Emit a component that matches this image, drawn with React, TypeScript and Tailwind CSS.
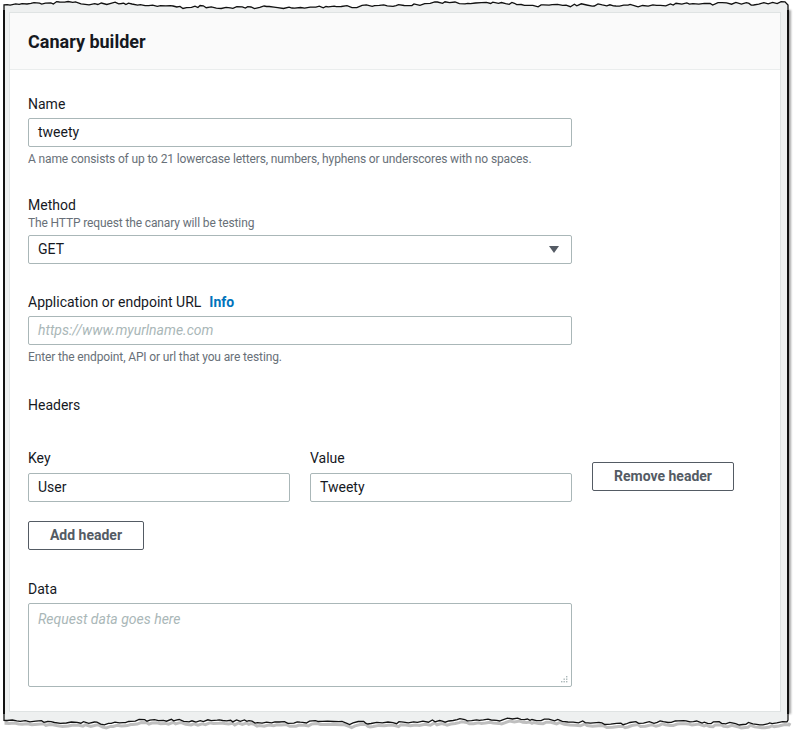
import React from "react";

// little seeded random so the torn edge is the same on every render
const makeRand = (seed: number) => () => {
  seed = (seed * 16807) % 2147483647;
  return seed / 2147483647;
};

const tornPoints = (x0: number, x1: number, base: number, amp: number, seed: number) => {
  const rand = makeRand(seed);
  const pts: [number, number][] = [];
  let x = x0;
  let drift = 0;
  while (x < x1) {
    drift += (rand() - 0.5) * 1.6;
    drift = Math.max(-amp, Math.min(amp, drift));
    const jitter = (rand() - 0.5) * 2.2;
    pts.push([x, +(base + drift + jitter).toFixed(1)]);
    x += 2 + rand() * 4;
  }
  pts.push([x1, base]);
  return pts;
};

const TornTop = () => {
  const H = 10;
  const pts = tornPoints(4, 788, 5, 2.5, 97);
  const line = pts.map(([x, y]) => `${x.toFixed(1)},${y}`).join(" L");
  return (
    <svg width="800" height={H} className="block">
      <path d={`M4,${H} L${line} L788,${H} Z`} fill="#eef0f0" />
      <path d={`M4,${H} L${line} L788,${H}`} fill="none" stroke="#111" strokeWidth="1.3" />
    </svg>
  );
};

const TornBottom = () => {
  const H = 20;
  const pts = tornPoints(4, 788, 6, 4, 4242);
  const line = pts.map(([x, y]) => `${x.toFixed(1)},${y}`).join(" L");
  const shadow = pts.map(([x, y]) => `${(x + 2).toFixed(1)},${(y + 3).toFixed(1)}`).join(" L");
  return (
    <svg width="800" height={H} className="block">
      <path d={`M6,0 L${shadow}`} fill="none" stroke="#000" strokeOpacity="0.25" strokeWidth="3" />
      <path d={`M4,0 L${line} L788,0 Z`} fill="#eef0f0" />
      <path d={`M4,0 L${line} L788,0`} fill="none" stroke="#111" strokeWidth="1.3" />
    </svg>
  );
};

const Label = ({ children }: { children: React.ReactNode }) => (
  <div className="text-[14px] leading-[20px] text-[#16191f]">{children}</div>
);

const Hint = ({ children }: { children: React.ReactNode }) => (
  <div className="text-[12px] leading-[16px] tracking-[-0.13px] text-[#687078]">{children}</div>
);

const TextBox = ({ value, placeholder }: { value?: string; placeholder?: string }) => (
  <div className="h-[29px] w-full border border-[#aab7b8] rounded-[2px] bg-white pl-[9px] flex items-center text-[14px]">
    {value ? (
      <span className="text-[#16191f]">{value}</span>
    ) : (
      <span className="italic text-[#aab7b8]">{placeholder}</span>
    )}
  </div>
);

const Button = ({ children, className = "" }: { children: React.ReactNode; className?: string }) => (
  <button
    className={
      "h-[29px] border border-[#545b64] rounded-[2px] bg-white text-[14px] font-bold text-[#545b64] " +
      className
    }
  >
    {children}
  </button>
);

export default function App() {
  return (
    <div className="w-[800px] h-[733px] bg-white overflow-hidden font-['Roboto',_'Liberation_Sans',_sans-serif]">
      <TornTop />
      <div className="ml-[3px] w-[786px] border-l-2 border-r-2 border-[#111] bg-[#eef0f0] pl-[4px] pr-[6px] pt-[2px] pb-[2px] shadow-[2px_0_2px_rgba(0,0,0,0.35)]">
        <div className="h-[700px] border border-[#dfe3e3] bg-white">
          <div className="h-[57px] bg-[#fafafa] border-b border-[#eaeded] px-[18px] flex items-center">
            <h2 className="text-[18px] font-bold text-[#16191f]">Canary builder</h2>
          </div>

          <div className="px-[18px] pt-[24px]">
            <div className="w-[544px]">
              <Label>Name</Label>
              <div className="mt-[4px]">
                <TextBox value="tweety" />
              </div>
              <div className="mt-[4px]">
                <Hint>A name consists of up to 21 lowercase letters, numbers, hyphens or underscores with no spaces.</Hint>
              </div>

              <div className="mt-[28px]">
                <Label>Method</Label>
                <Hint>The HTTP request the canary will be testing</Hint>
                <div className="mt-[4px] h-[29px] border border-[#aab7b8] rounded-[2px] pl-[9px] pr-[12px] flex items-center justify-between">
                  <span className="text-[14px] text-[#16191f]">GET</span>
                  <svg width="10" height="7" viewBox="0 0 10 7">
                    <path d="M0 0 H10 L5 7 Z" fill="#545b64" />
                  </svg>
                </div>
              </div>

              <div className="mt-[28px]">
                <Label>
                  Application or endpoint URL
                  <span className="ml-[8px] font-bold text-[#0073bb]">Info</span>
                </Label>
                <div className="mt-[4px]">
                  <TextBox placeholder="https://www.myurlname.com" />
                </div>
                <div className="mt-[4px]">
                  <Hint>Enter the endpoint, API or url that you are testing.</Hint>
                </div>
              </div>

              <div className="mt-[30px]">
                <Label>Headers</Label>
              </div>
            </div>

            <div className="mt-[33px] flex items-start gap-[20px]">
              <div className="w-[544px] grid grid-cols-2 gap-x-[20px]">
                <div>
                  <Label>Key</Label>
                  <div className="mt-[5px]">
                    <TextBox value="User" />
                  </div>
                </div>
                <div>
                  <Label>Value</Label>
                  <div className="mt-[5px]">
                    <TextBox value="Tweety" />
                  </div>
                </div>
              </div>
              <Button className="mt-[14px] w-[142px]">Remove header</Button>
            </div>

            <Button className="mt-[19px] w-[116px]">Add header</Button>

            <div className="mt-[29px] w-[544px]">
              <Label>Data</Label>
              <div className="relative mt-[4px] h-[84px] border border-[#aab7b8] rounded-[2px] px-[9px] pt-[3px]">
                <span className="text-[14px] italic text-[#aab7b8]">Request data goes here</span>
                <svg width="7" height="7" viewBox="0 0 7 7" className="absolute right-[3px] bottom-[3px]">
                  <rect x="5" y="0" width="1.4" height="1.4" fill="#aab7b8" />
                  <rect x="2.5" y="2.5" width="1.4" height="1.4" fill="#aab7b8" />
                  <rect x="5" y="2.5" width="1.4" height="1.4" fill="#aab7b8" />
                  <rect x="0" y="5" width="1.4" height="1.4" fill="#aab7b8" />
                  <rect x="2.5" y="5" width="1.4" height="1.4" fill="#aab7b8" />
                  <rect x="5" y="5" width="1.4" height="1.4" fill="#aab7b8" />
                </svg>
              </div>
            </div>
          </div>
        </div>
      </div>
      <TornBottom />
    </div>
  );
}
